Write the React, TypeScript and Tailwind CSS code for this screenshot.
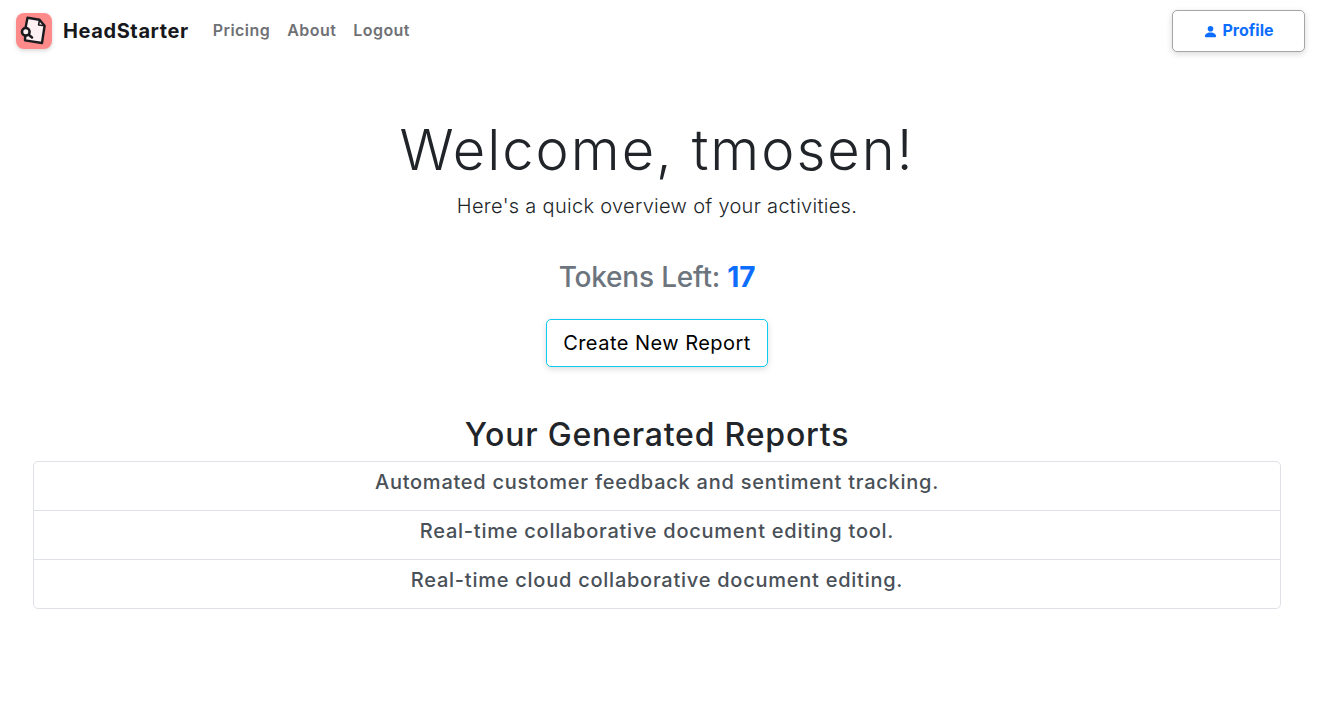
import React from 'react';

const reports = [
  'Automated customer feedback and sentiment tracking.',
  'Real-time collaborative document editing tool.',
  'Real-time cloud collaborative document editing.',
];

const Logo = () => (
  <div className="flex h-9 w-9 items-center justify-center rounded-lg bg-[#ff8a8a] shadow-[0_2px_4px_rgba(0,0,0,0.15)]">
    <svg width="36" height="36" viewBox="0 0 36 36" fill="none">
      <path
        d="M11.5 4.8 L23.5 6.8 L28.6 12.8 L26 30 L9 27.4 L9.6 14.5 Z"
        fill="#fff1f1"
        stroke="#1b1b1f"
        strokeWidth="2.4"
        strokeLinejoin="round"
      />
      <path d="M23.5 6.8 L22.6 12 L28.6 12.8" fill="none" stroke="#1b1b1f" strokeWidth="1.6" strokeLinejoin="round" />
      <circle cx="9.8" cy="18.8" r="3.8" fill="#fff1f1" stroke="#1b1b1f" strokeWidth="2.6" />
      <path d="M12.8 21.8 L16 24.4" stroke="#1b1b1f" strokeWidth="2.6" strokeLinecap="round" />
    </svg>
  </div>
);

export default function App() {
  return (
    <div className="min-h-[718px] w-[1314px] bg-white font-['Inter','Liberation_Sans',sans-serif]">
      {/* navbar */}
      <nav className="flex h-[62px] items-center justify-between pl-4 pr-[9px]">
        <div className="flex items-center">
          <Logo />
          <span className="ml-[11px] text-[20px] font-bold tracking-[0.6px] text-[#16181b]">HeadStarter</span>
          <div className="ml-6 flex gap-[17px] pb-[2px] text-[16px] leading-[22px] font-semibold tracking-[0.45px] text-[#6f7175]">
            <span>Pricing</span>
            <span>About</span>
            <span>Logout</span>
          </div>
        </div>
        <button className="flex h-[42px] w-[133px] items-center justify-center gap-1 rounded-[5px] border border-[#a3a5a8] bg-white pb-[2px] text-[16px] leading-[20px] font-bold text-[#0d6efd] shadow-[0_2px_6px_rgba(0,0,0,0.15)]">
          <svg className="mt-[3px]" width="15" height="15" viewBox="0 0 16 16" fill="#0d6efd">
            <path d="M3 14s-1 0-1-1 1-4 6-4 6 3 6 4-1 1-1 1H3zm5-6a3 3 0 1 0 0-6 3 3 0 0 0 0 6z" />
          </svg>
          Profile
        </button>
      </nav>

      {/* welcome */}
      <main className="flex flex-col items-center px-[33px]">
        <h1 className="mt-[50px] text-[56px] leading-[76px] font-light tracking-[2px] text-[#212529]">Welcome, tmosen!</h1>
        <p className="mt-[3px] text-[20px] leading-[30px] font-light tracking-[0.3px] text-[#212529]">Here's a quick overview of your activities.</p>
        <p className="mt-[35px] text-[28px] leading-[42px] font-medium tracking-[-0.2px] text-[#6c757d]">
          Tokens Left: <span className="font-bold text-[#0d6efd]">17</span>
        </p>
        <button className="mt-[21px] h-12 w-[222px] rounded-[5px] border border-[#0dcaf0] bg-white text-[20px] tracking-[0.47px] text-black shadow-[0_2px_6px_rgba(0,0,0,0.15)]">
          Create New Report
        </button>
        <h3 className="mt-[44px] mb-[2px] text-[32px] leading-[48px] font-medium tracking-[0.8px] text-[#212529]">Your Generated Reports</h3>
        <ul className="w-full rounded-[5px] border border-[#dee2e6]">
          {reports.map((r) => (
            <li key={r} className="flex h-[49px] items-start justify-center border-b border-[#dee2e6] pt-[5px] text-[20px] leading-[30px] font-medium tracking-[0.75px] text-[#495057] last:h-[48px] last:border-b-0">
              {r}
            </li>
          ))}
        </ul>
      </main>
    </div>
  );
}
